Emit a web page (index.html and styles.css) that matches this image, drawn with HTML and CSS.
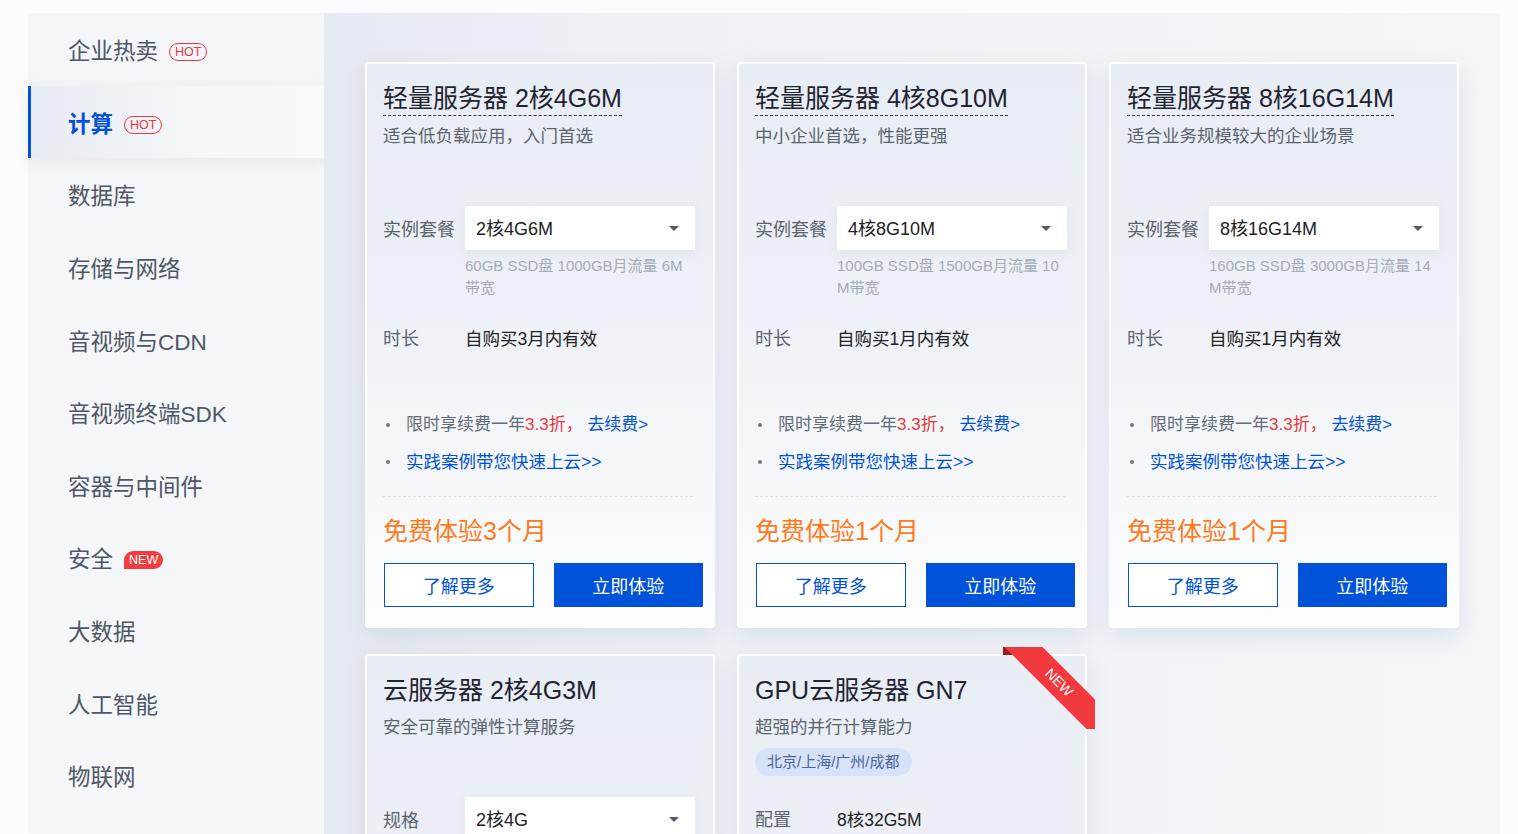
FILE: index.html
```html
<!DOCTYPE html>
<html lang="zh-CN">
<head>
    <meta charset="UTF-8">
    <meta name="viewport" content="width=device-width, initial-scale=1.0">
    <title>产品体验</title>
    <link rel="stylesheet" href="styles.css">
</head>
<body>
    <div class="page">
        <ul class="side-nav">
            <li class="nav-item">企业热卖 <span class="badge badge-hot">HOT</span></li>
            <li class="nav-item active">计算 <span class="badge badge-hot">HOT</span></li>
            <li class="nav-item">数据库</li>
            <li class="nav-item">存储与网络</li>
            <li class="nav-item">音视频与CDN</li>
            <li class="nav-item">音视频终端SDK</li>
            <li class="nav-item">容器与中间件</li>
            <li class="nav-item">安全 <span class="badge badge-new">NEW</span></li>
            <li class="nav-item">大数据</li>
            <li class="nav-item">人工智能</li>
            <li class="nav-item">物联网</li>
            <li class="nav-item">开发与运维</li>
        </ul>

        <div class="content">
            <div class="card-grid">
                <div class="card">
                    <div class="card-head">
                        <h3 class="card-title dotted">轻量服务器 2核4G6M</h3>
                        <p class="card-desc">适合低负载应用，入门首选</p>
                    </div>
                    <div class="form-row">
                        <span class="form-label">实例套餐</span>
                        <div class="select">2核4G6M<i class="caret"></i></div>
                    </div>
                    <p class="form-tip">60GB SSD盘 1000GB月流量 6M 带宽</p>
                    <div class="form-row plain">
                        <span class="form-label">时长</span>
                        <span class="form-value">自购买3月内有效</span>
                    </div>
                    <ul class="perks">
                        <li>限时享续费一年<span class="red">3.3折，</span> <a href="#">去续费&gt;</a></li>
                        <li><a href="#">实践案例带您快速上云&gt;&gt;</a></li>
                    </ul>
                    <div class="price">免费体验3个月</div>
                    <div class="actions">
                        <button class="btn btn-line">了解更多</button>
                        <button class="btn btn-primary">立即体验</button>
                    </div>
                </div>

                <div class="card">
                    <div class="card-head">
                        <h3 class="card-title dotted">轻量服务器 4核8G10M</h3>
                        <p class="card-desc">中小企业首选，性能更强</p>
                    </div>
                    <div class="form-row">
                        <span class="form-label">实例套餐</span>
                        <div class="select">4核8G10M<i class="caret"></i></div>
                    </div>
                    <p class="form-tip">100GB SSD盘 1500GB月流量 10M带宽</p>
                    <div class="form-row plain">
                        <span class="form-label">时长</span>
                        <span class="form-value">自购买1月内有效</span>
                    </div>
                    <ul class="perks">
                        <li>限时享续费一年<span class="red">3.3折，</span> <a href="#">去续费&gt;</a></li>
                        <li><a href="#">实践案例带您快速上云&gt;&gt;</a></li>
                    </ul>
                    <div class="price">免费体验1个月</div>
                    <div class="actions">
                        <button class="btn btn-line">了解更多</button>
                        <button class="btn btn-primary">立即体验</button>
                    </div>
                </div>

                <div class="card">
                    <div class="card-head">
                        <h3 class="card-title dotted">轻量服务器 8核16G14M</h3>
                        <p class="card-desc">适合业务规模较大的企业场景</p>
                    </div>
                    <div class="form-row">
                        <span class="form-label">实例套餐</span>
                        <div class="select">8核16G14M<i class="caret"></i></div>
                    </div>
                    <p class="form-tip">160GB SSD盘 3000GB月流量 14M带宽</p>
                    <div class="form-row plain">
                        <span class="form-label">时长</span>
                        <span class="form-value">自购买1月内有效</span>
                    </div>
                    <ul class="perks">
                        <li>限时享续费一年<span class="red">3.3折，</span> <a href="#">去续费&gt;</a></li>
                        <li><a href="#">实践案例带您快速上云&gt;&gt;</a></li>
                    </ul>
                    <div class="price">免费体验1个月</div>
                    <div class="actions">
                        <button class="btn btn-line">了解更多</button>
                        <button class="btn btn-primary">立即体验</button>
                    </div>
                </div>

                <div class="card">
                    <div class="card-head">
                        <h3 class="card-title">云服务器 2核4G3M</h3>
                        <p class="card-desc">安全可靠的弹性计算服务</p>
                    </div>
                    <div class="form-row">
                        <span class="form-label">规格</span>
                        <div class="select">2核4G<i class="caret"></i></div>
                    </div>
                    <p class="form-tip">50GB 高性能云硬盘 3M带宽</p>
                    <div class="form-row plain">
                        <span class="form-label">时长</span>
                        <span class="form-value">自购买1月内有效</span>
                    </div>
                    <ul class="perks">
                        <li>限时享续费一年<span class="red">3.3折，</span> <a href="#">去续费&gt;</a></li>
                        <li><a href="#">实践案例带您快速上云&gt;&gt;</a></li>
                    </ul>
                    <div class="price">免费体验1个月</div>
                    <div class="actions">
                        <button class="btn btn-line">了解更多</button>
                        <button class="btn btn-primary">立即体验</button>
                    </div>
                </div>

                <div class="card">
                    <div class="ribbon"><span>NEW</span></div>
                    <div class="card-head with-tag">
                        <h3 class="card-title">GPU云服务器 GN7</h3>
                        <p class="card-desc">超强的并行计算能力</p>
                        <span class="region-tag">北京/上海/广州/成都</span>
                    </div>
                    <div class="form-row plain">
                        <span class="form-label">配置</span>
                        <span class="form-value">8核32G5M</span>
                    </div>
                    <p class="form-tip">NVIDIA T4 GPU 100GB SSD云硬盘</p>
                    <div class="form-row plain">
                        <span class="form-label">时长</span>
                        <span class="form-value">自购买15天内有效</span>
                    </div>
                    <ul class="perks">
                        <li>新用户专享<span class="red">限量</span>体验</li>
                        <li><a href="#">实践案例带您快速上云&gt;&gt;</a></li>
                    </ul>
                    <div class="price">免费体验15天</div>
                    <div class="actions">
                        <button class="btn btn-line">了解更多</button>
                        <button class="btn btn-primary">立即体验</button>
                    </div>
                </div>
            </div>
        </div>
    </div>
</body>
</html>
```

FILE: styles.css
```css
* {
    box-sizing: border-box;
    margin: 0;
    padding: 0;
}

body {
    font-family: "Liberation Sans", "Noto Sans CJK SC", sans-serif;
    background-color: #fbfcfd;
    color: #222;
}

a {
    color: #0052d9;
    text-decoration: none;
}

.page {
    display: flex;
    width: 1472px;
    margin: 13px 0 0 28px;
}

/* left menu */
.side-nav {
    list-style: none;
    width: 296px;
    flex-shrink: 0;
    background: linear-gradient(180deg, #f3f5f8 0%, #f7f8fa 100%);
}

.nav-item {
    display: flex;
    align-items: center;
    height: 72.6px;
    padding-left: 40px;
    font-size: 22.5px;
    color: #4f5666;
    cursor: pointer;
}

.nav-item.active {
    font-weight: bold;
    color: #0052d9;
    border-left: 3px solid #0052d9;
    padding-left: 37px;
    background: linear-gradient(90deg, #e7ebf2 0%, #f5f7fa 60%, #f8f9fb 100%);
    box-shadow: 0 4px 14px rgba(200, 208, 222, 0.35);
}

.badge {
    display: inline-block;
    margin: 6px 0 0 11px;
    height: 18px;
    padding: 0 5px;
    font-size: 12.5px;
    line-height: 16px;
    font-weight: normal;
    border-radius: 9px;
}

.badge-hot {
    color: #e4393c;
    border: 1px solid #e4393c;
}

.badge-new {
    color: #fff;
    background-color: #f23d40;
    line-height: 18px;
    border-radius: 9px 9px 9px 0;
}

/* right content */
.content {
    flex: 1;
    min-height: 900px;
    padding: 49px 40px 40px 41px;
    background: linear-gradient(90deg, #e5e9f1 0%, #eef1f6 25%, #f3f5f9 100%);
}

.card-grid {
    display: grid;
    grid-template-columns: repeat(3, 350px);
    column-gap: 22px;
    row-gap: 26px;
}

.card {
    position: relative;
    padding: 17px 10px 19px 16px;
    border: 2px solid #fff;
    border-radius: 4px;
    background: linear-gradient(180deg, #e8ecf4 0%, #eef1f7 45%, #fdfdfe 100%);
    box-shadow: 0 8px 22px rgba(170, 182, 205, 0.3);
}

.card-head {
    margin-bottom: 57px;
}

.card-head.with-tag {
    margin-bottom: 20px;
}

.card-title {
    display: inline-block;
    font-size: 25px;
    line-height: 34px;
    font-weight: normal;
    color: #1f2430;
}

.card-title.dotted {
    border-bottom: 1px dashed #333;
}

.card-desc {
    margin-top: 7px;
    font-size: 17.5px;
    line-height: 26px;
    color: #5c6370;
}

.region-tag {
    display: inline-block;
    margin-top: 8px;
    height: 28px;
    padding: 0 12px;
    font-size: 15px;
    line-height: 28px;
    color: #4a6596;
    background-color: #d5e2f8;
    border-radius: 14px;
}

.form-row {
    display: flex;
    align-items: center;
    height: 44px;
}

.form-label {
    width: 82px;
    flex-shrink: 0;
    font-size: 18px;
    color: #5c6370;
}

.form-value {
    font-size: 17.5px;
    color: #222;
}

.select {
    position: relative;
    width: 230px;
    height: 44px;
    padding-left: 11px;
    font-size: 18px;
    line-height: 47px;
    color: #222;
    background-color: #fff;
    box-shadow: 0 3px 10px rgba(165, 176, 198, 0.2);
}

.caret {
    position: absolute;
    top: 20px;
    right: 16px;
    border-left: 5px solid transparent;
    border-right: 5px solid transparent;
    border-top: 5px solid #555b66;
}

.form-tip {
    width: 312px;
    margin-top: 5px;
    padding-left: 82px;
    font-size: 15px;
    line-height: 22px;
    color: #a4abb8;
    word-break: break-all;
}

.form-row.plain {
    margin-top: 16px;
}

.perks {
    list-style: none;
    margin-top: 54px;
    padding-bottom: 21px;
    margin-right: 10px;
    border-bottom: 1px dashed #dcdfe5;
}

.perks li {
    position: relative;
    padding-left: 23px;
    font-size: 17px;
    line-height: 24px;
    color: #636a76;
}

.perks li + li {
    margin-top: 13px;
}

.perks li + li a {
    font-size: 17.5px;
}

.perks li:before {
    content: "";
    position: absolute;
    left: 3px;
    top: 10px;
    width: 4px;
    height: 4px;
    border-radius: 50%;
    background-color: #777;
}

.perks .red {
    color: #e8393d;
}

.price {
    margin-top: 18px;
    font-size: 25px;
    line-height: 32px;
    color: #ff7a1a;
}

.actions {
    display: flex;
    gap: 20px;
    margin-top: 16px;
    padding-left: 1px;
}

.btn {
    width: 150px;
    height: 44px;
    font-family: inherit;
    font-size: 18px;
    cursor: pointer;
    border-radius: 0;
}

.btn-line {
    color: #0052d9;
    background-color: #fff;
    border: 1px solid #0052d9;
}

.btn-primary {
    color: #fff;
    background-color: #0052d9;
    border: none;
}

/* corner ribbon */
.ribbon {
    position: absolute;
    top: -9px;
    right: -10px;
    width: 92px;
    height: 82px;
    overflow: hidden;
}

.ribbon:before,
.ribbon:after {
    content: "";
    position: absolute;
    width: 9px;
    height: 8px;
    background-color: #a3171c;
}

.ribbon:before {
    top: 0;
    left: 0;
}

.ribbon:after {
    bottom: 0;
    right: 0;
}

.ribbon span {
    position: absolute;
    z-index: 1;
    left: -19px;
    top: 22px;
    width: 150px;
    height: 27px;
    font-size: 14px;
    line-height: 27px;
    text-align: center;
    color: #fff;
    background-color: #f03a3e;
    transform: rotate(45deg);
}
```
